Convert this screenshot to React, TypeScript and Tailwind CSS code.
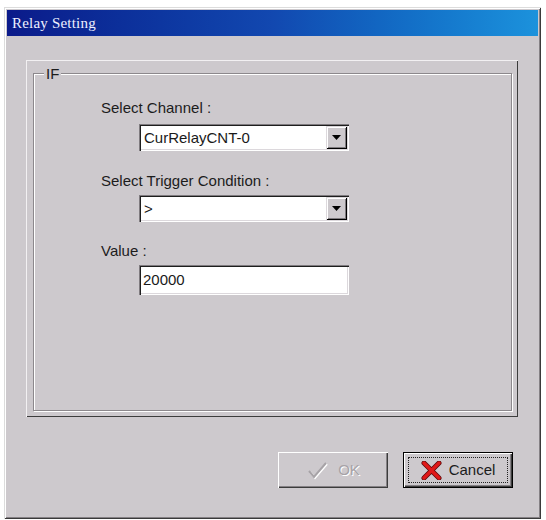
import React from "react";

const sans = "font-['Liberation_Sans',Arial,sans-serif]";

const ArrowDown = () => (
  <svg width="9" height="5" viewBox="0 0 9 5">
    <path d="M0 0 H9 L4.5 5 Z" fill="#000" />
  </svg>
);

const ComboBox = ({ value }: { value: string }) => (
  <div className="flex w-[210px] h-[27px] bg-white shadow-[inset_1px_1px_#7f7b7f,inset_2px_2px_#1e1e1e,inset_-1px_-1px_#ffffff,inset_-2px_-2px_#dcd8dc]">
    <div className={`flex-1 flex items-center pl-[5px] pt-[1px] text-[15px] text-[#1a1a1a] ${sans}`}>{value}</div>
    <div className="w-[21px] my-[2px] mr-[2px] flex items-center justify-center bg-[#cdc9cd] shadow-[inset_1px_1px_#dcd8dc,inset_-1px_-1px_#000000,inset_2px_2px_#ffffff,inset_-2px_-2px_#7f7b7f]">
      <ArrowDown />
    </div>
  </div>
);

const CheckIcon = () => (
  <svg width="22" height="20" viewBox="0 0 22 20">
    <path d="M3 11 L8 17 L20 3" fill="none" stroke="#ffffff" strokeWidth="2" transform="translate(1 1)" />
    <path d="M3 11 L8 17 L20 3" fill="none" stroke="#a7a3a7" strokeWidth="2" />
  </svg>
);

const XIcon = () => (
  <svg width="21" height="19" viewBox="0 0 21 19">
    <path d="M3 2 L18 17 M18 2 L3 17" stroke="#5a0a0a" strokeWidth="5" strokeLinecap="round" />
    <path d="M3 2 L18 17 M18 2 L3 17" stroke="#e01818" strokeWidth="3.4" strokeLinecap="round" />
  </svg>
);

const Label = ({ children, className = "" }: { children: React.ReactNode; className?: string }) => (
  <div className={`text-[15px] leading-[17px] text-[#1c1c1c] ${sans} ${className}`}>{children}</div>
);

export default function App() {
  return (
    <div className="w-[546px] h-[520px] bg-white pt-[7px] pl-[4px]">
      <div className="w-[537px] h-[512px] bg-[#cdc9cd] p-[3px] flex flex-col shadow-[inset_1px_1px_#dcdcdc,inset_-1px_-1px_#3a3a3a,inset_2px_2px_#ffffff,inset_-2px_-2px_#858185]">
        {/* title bar */}
        <div className="h-[26px] flex items-center pl-[5px] bg-gradient-to-r from-[#0b1a8a] via-[#1248b0] to-[#1c92dc]">
          <span className="text-[15px] text-[#eef0ff] font-['Liberation_Serif','Times_New_Roman',serif] tracking-[0.2px]">Relay Setting</span>
        </div>

        {/* raised panel */}
        <div className="ml-[19px] mt-[24px] w-[492px] h-[357px] pl-[7px] pt-[13px] pr-[6px] pb-[6px] shadow-[inset_1px_1px_#f2f0f2,inset_-1px_-1px_#3c3c3c]">
          {/* group box */}
          <div className="relative h-full border border-[#8c888c] shadow-[1px_1px_#ffffff,inset_1px_1px_#ffffff] pl-[67px] pt-[25px]">
            <span className={`absolute left-[10px] top-[-9px] px-[2px] bg-[#cdc9cd] text-[15px] leading-[17px] text-[#1c1c1c] ${sans}`}>IF</span>

            <Label>Select Channel :</Label>
            <div className="ml-[38px] mt-[8px]">
              <ComboBox value="CurRelayCNT-0" />
            </div>

            <Label className="mt-[21px]">Select Trigger Condition :</Label>
            <div className="ml-[38px] mt-[6px]">
              <ComboBox value=">" />
            </div>

            <Label className="mt-[20px]">Value :</Label>
            <div className="ml-[38px] mt-[6px] w-[210px] h-[30px] bg-white flex items-center pl-[4px] pt-[1px] shadow-[inset_1px_1px_#7f7b7f,inset_2px_2px_#1e1e1e,inset_-1px_-1px_#ffffff,inset_-2px_-2px_#dcd8dc]">
              <span className={`text-[15px] text-[#1a1a1a] ${sans}`}>20000</span>
            </div>
          </div>
        </div>

        {/* buttons */}
        <div className="mt-[35px] flex justify-end gap-[15px] pr-[25px]">
          <div className="w-[110px] h-[36px] flex items-center justify-center gap-[10px] bg-[#cdc9cd] shadow-[inset_1px_1px_#ffffff,inset_-1px_-1px_#3c3c3c,inset_-2px_-2px_#858185]">
            <CheckIcon />
            <span className={`text-[15px] text-[#a7a3a7] [text-shadow:1px_1px_#ffffff] ${sans}`}>OK</span>
          </div>
          <div className="w-[110px] h-[36px] border border-black bg-[#cdc9cd] p-[1px] shadow-[inset_1px_1px_#ffffff,inset_-1px_-1px_#3c3c3c,inset_-2px_-2px_#858185]">
            <div className="h-full m-[3px] mb-0 flex items-center justify-center gap-[7px] border border-dotted border-[#222]" style={{ height: "calc(100% - 6px)" }}>
              <XIcon />
              <span className={`text-[15px] text-[#1c1c1c] ${sans}`}>Cancel</span>
            </div>
          </div>
        </div>
      </div>
    </div>
  );
}
